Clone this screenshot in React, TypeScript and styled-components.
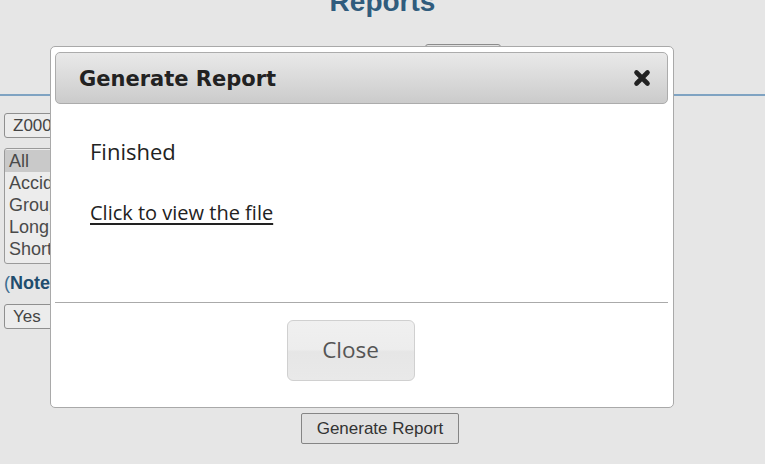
import React from "react";
import styled, { createGlobalStyle } from "styled-components";

const Global = createGlobalStyle`
  html, body { margin: 0; padding: 0; }
  body {
    width: 765px;
    height: 464px;
    overflow: hidden;
    background: #e6e6e6;
    font-family: "Liberation Sans", Arial, sans-serif;
  }
`;

const Page = styled.div`
  position: relative;
  width: 765px;
  height: 464px;
  overflow: hidden;
  display: flex;
  flex-direction: column;
  background: #e6e6e6;
`;

const Heading = styled.h1`
  margin: -13px 0 0;
  text-align: center;
  font-size: 28px;
  line-height: 30px;
  font-weight: bold;
  color: #305c7d;
`;

const Toolbar = styled.div`
  display: flex;
  justify-content: center;
  padding: 27px 0 0 160px;
  height: 77px;
  box-sizing: border-box;
`;

const SmallButton = styled.div`
  width: 76px;
  height: 26px;
  box-sizing: border-box;
  border: 1px solid #8c8c8c;
  border-radius: 3px;
  background: #e0e0e0;
`;

const Divider = styled.div`
  height: 2px;
  background: #7fa3c2;
`;

const Form = styled.div`
  display: flex;
  flex-direction: column;
  align-items: flex-start;
  padding: 17px 0 0 4px;
  font-size: 17px;
  color: #444;
`;

const SelectBox = styled.div<{ $mt?: number }>`
  width: 120px;
  height: 25px;
  box-sizing: border-box;
  border: 1px solid #8f8f8f;
  border-radius: 3px;
  background: #ececec;
  padding: 2px 0 0 8px;
  line-height: 20px;
  margin-top: ${(p) => p.$mt ?? 0}px;
`;

const ListBox = styled.div`
  margin-top: 10px;
  width: 140px;
  height: 116px;
  box-sizing: border-box;
  border: 1px solid #9a9a9a;
  border-radius: 3px;
  background: #ececec;
  padding: 1px 0;
`;

const ListItem = styled.div<{ $selected?: boolean }>`
  height: 22px;
  line-height: 22px;
  padding-left: 4px;
  font-size: 18px;
  color: #4a4a4a;
  background: ${(p) => (p.$selected ? "#c9c9c9" : "transparent")};
`;

const Note = styled.div`
  margin-top: 6px;
  font-size: 18px;
  line-height: 26px;
  color: #3d6d90;
  b { color: #1f4d6e; }
`;

const Footer = styled.div`
  display: flex;
  justify-content: center;
  padding: 84px 5px 0 0;
`;

const PageButton = styled.div`
  width: 158px;
  height: 31px;
  box-sizing: border-box;
  border: 1px solid #858585;
  border-radius: 2px;
  background: #e1e1e1;
  display: flex;
  align-items: center;
  justify-content: center;
  font-size: 17px;
  color: #333;
`;

/* ---------- Dialog ---------- */

const Dialog = styled.div`
  position: absolute;
  left: 50px;
  top: 46px;
  width: 624px;
  height: 362px;
  box-sizing: border-box;
  border: 1px solid #a9a9a9;
  border-radius: 5px;
  background: #fff;
  padding: 5px 5px 0 4px;
  display: flex;
  flex-direction: column;
`;

const TitleBar = styled.div`
  height: 52px;
  box-sizing: border-box;
  border: 1px solid #acacac;
  border-radius: 5px;
  background: linear-gradient(to bottom, #e9e9e9 0%, #dcdcdc 45%, #cbcbcb 100%);
  display: flex;
  align-items: center;
  justify-content: space-between;
  padding: 0 15px 0 23px;
`;

const Title = styled.span`
  font-family: "DejaVu Sans", Verdana, sans-serif;
  font-weight: bold;
  font-size: 21px;
  color: #222;
  padding-top: 1px;
`;

const CloseIcon = styled.svg`
  width: 20px;
  height: 20px;
  display: block;
`;

const Content = styled.div`
  height: 198px;
  box-sizing: border-box;
  padding: 32px 0 0 35px;
  font-family: "Open Sans", "Segoe UI", sans-serif;
  color: #222;
  display: flex;
  flex-direction: column;
  align-items: flex-start;
  gap: 33px;
`;

const Line = styled.div`
  font-size: 22px;
  line-height: 30px;
`;

const FileLink = styled.a`
  font-size: 20px;
  line-height: 27px;
  color: #222;
  text-decoration: underline;
  text-underline-offset: 3px;
  cursor: pointer;
`;

const ButtonPane = styled.div`
  border-top: 1px solid #aaaaaa;
  padding: 17px 22px 0 0;
  display: flex;
  justify-content: center;
`;

const DialogButton = styled.button`
  width: 128px;
  height: 61px;
  box-sizing: border-box;
  border: 1px solid #d0d0d0;
  border-radius: 6px;
  background: linear-gradient(to bottom, #f0f0f0 0%, #ededed 48%, #e6e6e6 52%, #e9e9e9 100%);
  font-family: "Open Sans", "Segoe UI", sans-serif;
  font-size: 22.5px;
  color: #555;
  padding: 0 0 2px;
`;

export default function App() {
  return (
    <>
      <Global />
      <Page>
        <Heading>Reports</Heading>
        <Toolbar>
          <SmallButton />
        </Toolbar>
        <Divider />
        <Form>
          <SelectBox>Z0001</SelectBox>
          <ListBox>
            <ListItem $selected>All</ListItem>
            <ListItem>Accident</ListItem>
            <ListItem>Group</ListItem>
            <ListItem>Long Term</ListItem>
            <ListItem>Short Term</ListItem>
          </ListBox>
          <Note>
            (<b>Note</b>
          </Note>
          <SelectBox $mt={8}>Yes</SelectBox>
        </Form>
        <Footer>
          <PageButton>Generate Report</PageButton>
        </Footer>

        <Dialog role="dialog">
          <TitleBar>
            <Title>Generate Report</Title>
            <CloseIcon viewBox="0 0 20 20" aria-label="close">
              <path
                d="M4.5 4.5 L15.5 15.5 M15.5 4.5 L4.5 15.5"
                stroke="#222"
                strokeWidth="4.6"
                strokeLinecap="round"
                fill="none"
              />
            </CloseIcon>
          </TitleBar>
          <Content>
            <Line>Finished</Line>
            <FileLink>Click to view the file</FileLink>
          </Content>
          <ButtonPane>
            <DialogButton>Close</DialogButton>
          </ButtonPane>
        </Dialog>
      </Page>
    </>
  );
}
